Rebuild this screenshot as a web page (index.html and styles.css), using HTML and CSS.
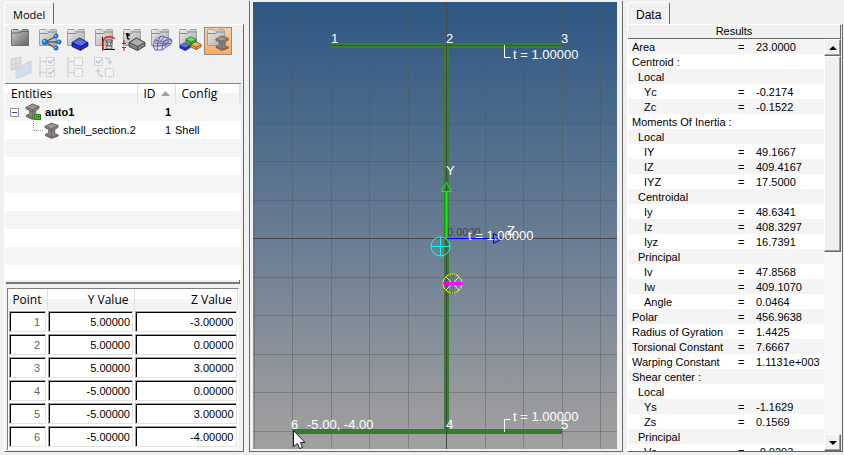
FILE: index.html
```html
<!DOCTYPE HTML>
<html lang="en">
<head>
<meta charset="utf-8">
<title>Section Browser</title>
<link rel="stylesheet" href="styles.css">
</head>
<body>
<svg class="defs" width="0" height="0" aria-hidden="true">
	<defs>
		<linearGradient id="gFolder" x1="0" y1="0" x2="1" y2="1"><stop offset="0" stop-color="#ededed"/><stop offset="1" stop-color="#a8a8a8"/></linearGradient>
		<linearGradient id="gDark" x1="0" y1="0" x2="1" y2="1"><stop offset="0" stop-color="#d0d0d0"/><stop offset="1" stop-color="#606060"/></linearGradient>
		<symbol id="folder" viewBox="0 0 24 24"><path d="M1.500 17.500V2.500Q1.500 1.500 2.500 1.500H8L10 3.500H11L12.500 1.500H17.500Q18.500 1.500 18.500 2.500V17.500Z" fill="url(#gFolder)" stroke="#a0a0a0"/><path d="M2 5.500h7.500l2-1.500h6.500" fill="none" stroke="#888"/></symbol>
		<symbol id="beam" viewBox="0 0 16 18"><path d="M1 4.500L8 1l7 2.500v2L11.500 8v4.500l3.500 1v1.500L8 17.500l-6.500-3V13L5 11.500V8L1 6z" fill="#8c8482" stroke="#635b59" stroke-width=".9"/><path d="M1.500 4.500L8 2l6.500 2L8 6.500z" fill="#9d9694"/><path d="M1 4.500l7 2.500 7-3M8 7v9M5 8l3 1.500L11.500 8M1.500 13L8 16l7-2" fill="none" stroke="#675e5c" stroke-width=".8"/></symbol>
		<symbol id="block" viewBox="0 0 18 14"><path d="M1 5.500l7.500-4.500L17 5.500V9l-7.500 4.500L1 9.500z" fill="currentColor" stroke="#111" stroke-opacity=".7"/><path d="M2 5.500L8.500 1.500l7.500 4-6.500 3.500z" fill="#fff" fill-opacity=".3"/><path d="M1 5.500l8.500 4L17 5.500M9.500 9.500V13" fill="none" stroke="#111" stroke-opacity=".5"/></symbol>
	</defs>
</svg>
<div class="app">
	<section class="pane model">
		<div class="tab">Model</div>
		<div class="panel">
			<div class="toolbar">
				<button title="New"><svg viewBox="0 0 24 24"><path d="M1.500 17.500V2.500Q1.500 1.500 2.500 1.500H8L10 3.500H11L12.500 1.500H17.500Q18.500 1.500 18.500 2.500V17.500Z" fill="url(#gDark)" stroke="#707070"/><path d="M2 5h8l2-1.500h6" fill="none" stroke="#666"/></svg></button>
				<button title="Assembly"><svg viewBox="0 0 24 24"><use href="#folder"/><path d="M19 8L7 14l14 0M7 14l10 6" fill="none" stroke="#333"/><g fill="#1c86e0" stroke="#0b529a" stroke-width=".6"><circle cx="7" cy="14" r="2.800"/><circle cx="18" cy="8" r="2.200"/><circle cx="21" cy="14" r="2.200"/><circle cx="18" cy="20" r="2.200"/></g><g fill="#9ed3ff"><circle cx="6" cy="13" r="1"/><circle cx="17.500" cy="7.500" r=".8"/><circle cx="20.500" cy="13.500" r=".8"/><circle cx="17.500" cy="19.500" r=".8"/></g></svg></button>
				<button title="Component"><svg viewBox="0 0 24 24"><use href="#folder"/><use href="#block" x="5" y="9" width="18" height="14" color="#1c2ce0"/></svg></button>
				<button title="Curve"><svg viewBox="0 0 24 24"><use href="#folder"/><path d="M8.500 9v13.500M8 21.500h13" stroke="#111" fill="none"/><path d="M9 22V14q1-5 5-5h4l3 2" stroke="#f01414" fill="none" stroke-width="1.500"/><path d="M12 12h6v2l-2 2 2 3v2h-6v-2l2-3-2-2z" fill="#ddd" stroke="#333" stroke-width=".8"/><path d="M12 14h6M13 18h4" stroke="#444"/></svg></button>
				<button title="Property"><svg viewBox="0 0 24 24"><use href="#folder"/><path d="M5.500 5v5q0 1 2 1M4 7h4" fill="none" stroke="#000" stroke-width="1.500"/><use href="#block" x="6" y="9" width="18" height="14" color="#888"/><path d="M0 15.500h4M0 19.500h4M2 12v3M2 20v3" stroke="#c01818" fill="none"/></svg></button>
				<button title="Mesh"><svg viewBox="0 0 24 24"><use href="#folder"/><path d="M3 18l2-6 6-4 7 2 4 2-1 4-9 6-7 0zM5 12l7 2 9-3M3 18l8 0 10-3M11 8l-3 5-1 9M18 10l-5 5-1 7M14 9l-4 5M22 12l-6 3-1 4M5 15l12 1" fill="#d5d5ee" fill-opacity=".6" stroke="#5c5cab" stroke-width=".9"/></svg></button>
				<button title="Multiple components"><svg viewBox="0 0 24 24"><use href="#folder"/><use href="#block" x="7" y="8" width="12" height="9" color="#21c82b"/><use href="#block" x="1" y="14" width="12" height="9" color="#2030dc"/><use href="#block" x="12" y="13" width="12" height="9" color="#ee9422"/></svg></button>
				<button class="on" title="Beam section"><svg viewBox="0 0 24 24"><use href="#folder"/><use href="#beam" x="9" y="7" width="14" height="16"/></svg></button>
				<button disabled title="Planes"><svg viewBox="0 0 24 24"><path d="M1 3l10-2v11L1 14zM1 8.500l10-2M6 2v11" fill="#aaa" stroke="#777"/><path d="M6 11q5 1 9-3 3-2 6-3v12q-4 0-7 3-3 2-8 2z" fill="#7da8da" stroke="#5785bd"/></svg></button>
				<button disabled title="Check all"><svg viewBox="0 0 24 24"><path d="M2 1v20M2 5.500h6M2 16.500h6" stroke="#888" stroke-width="1.500"/><path d="M8.500 1.500h8v8h-8zM8.500 12.500h8v8h-8z" fill="#fff" stroke="#888"/><path d="M10 5l2 2 4-4M10 16l2 2 4-4" fill="none" stroke="#2338b5" stroke-width="1.500"/></svg></button>
				<button disabled title="Uncheck all"><svg viewBox="0 0 24 24"><path d="M2 1v20M2 5.500h6M2 16.500h6" stroke="#888" stroke-width="1.500"/><path d="M8.500 1.500h8v8h-8zM8.500 12.500h8v8h-8z" fill="#fff" stroke="#888"/></svg></button>
				<button disabled title="Reverse"><svg viewBox="0 0 24 24"><path d="M.5 1.500h8v8h-8zM11.500 12.500h8v8h-8z" fill="#fff" stroke="#888"/><path d="M2 5l2 2 4-4" fill="none" stroke="#2338b5" stroke-width="1.500"/><path d="M11 2q5 0 5 4" fill="none" stroke="#888" stroke-width="2"/><path d="M13 5h6l-3 4z" fill="#888"/><path d="M9 20q-5 0-5-5" fill="none" stroke="#888" stroke-width="2"/><path d="M1 16h6l-3-4z" fill="#888"/></svg></button>
			</div>
			<div class="treebox">
				<table class="tree">
					<thead><tr><th class="ent">Entities</th><th class="id">ID <svg class="sort" viewBox="0 0 9 5"><path d="M0 5l4.500-5L9 5z" fill="#a5a195"/></svg></th><th class="cfg">Config</th><th class="rest"></th></tr></thead>
					<tbody>
						<tr class="parent"><td><div class="node"><svg class="twist" viewBox="0 0 9 9"><path d="M.5 .5h8v8h-8z" fill="#fff" stroke="#919191"/><path d="M2 4.500h5" stroke="#333d8a"/></svg><svg class="ico" viewBox="0 0 18 18"><use href="#beam" width="15" height="17"/><path d="M9.500 11.500h6v5h-6z" fill="#55c51d" stroke="#247a0a"/><path d="M11 14h4" stroke="#176000"/></svg>auto1</div></td><td class="num">1</td><td></td><td></td></tr>
						<tr><td><div class="node child"><svg class="elbow" viewBox="0 0 10 18"><path d="M.5 0v9.500H10" fill="none" stroke="#999" stroke-dasharray="1 1"/></svg><svg class="ico" viewBox="0 0 18 18"><use href="#beam" x="1" y="1" width="15" height="17"/></svg>shell_section.2</div></td><td class="num">1</td><td>Shell</td><td></td></tr>
					</tbody>
				</table>
			</div>
			<div class="splitter"></div>
			<div class="pointbox">
				<table class="points">
					<thead><tr><th class="pt">Point</th><th class="yv">Y Value</th><th>Z Value</th></tr></thead>
					<tbody>
						<tr><td><input class="key" aria-label="Point" value="1" readonly></td><td><input aria-label="Y Value 1" value="5.00000"></td><td><input aria-label="Z Value 1" value="-3.00000"></td></tr>
						<tr><td><input class="key" aria-label="Point" value="2" readonly></td><td><input aria-label="Y Value 2" value="5.00000"></td><td><input aria-label="Z Value 2" value="0.00000"></td></tr>
						<tr><td><input class="key" aria-label="Point" value="3" readonly></td><td><input aria-label="Y Value 3" value="5.00000"></td><td><input aria-label="Z Value 3" value="3.00000"></td></tr>
						<tr><td><input class="key" aria-label="Point" value="4" readonly></td><td><input aria-label="Y Value 4" value="-5.00000"></td><td><input aria-label="Z Value 4" value="0.00000"></td></tr>
						<tr><td><input class="key" aria-label="Point" value="5" readonly></td><td><input aria-label="Y Value 5" value="-5.00000"></td><td><input aria-label="Z Value 5" value="3.00000"></td></tr>
						<tr><td><input class="key" aria-label="Point" value="6" readonly></td><td><input aria-label="Y Value 6" value="-5.00000"></td><td><input aria-label="Z Value 6" value="-4.00000"></td></tr>
					</tbody>
				</table>
			</div>
		</div>
	</section>

	<main class="view">
		<svg class="plot" viewBox="253 2 364 447" preserveAspectRatio="xMidYMid meet">
			<!-- grid -->
			<path class="grid" d="M254.500 2v447M292.500 2v447M331.500 2v447M369.500 2v447M408.500 2v447M485.500 2v447M523.500 2v447M562.500 2v447M600.500 2v447M253 7.500h364M253 45.500h364M253 84.500h364M253 123.500h364M253 161.500h364M253 200.500h364M253 277.500h364M253 315.500h364M253 354.500h364M253 392.500h364M253 431.500h364"/>
			<!-- section -->
			<path class="plate" d="M331 45.500h231M446.500 45v386M293 431.500h269"/>
			<path class="axis" d="M253 238.500h364M446.500 2v447"/>
			<path class="mid" d="M331 45.500h231"/>
			<path d="M331 45.500h1M561.500 45.500h1M561.500 431.500h1" stroke="#f00"/>
			<text class="origin" x="447" y="236">0.0000</text>
			<!-- local axes -->
			<path d="M446.500 238V191" stroke="#0f0" stroke-width="2"/>
			<path d="M441.500 191.500h10l-5-9z" stroke="#0f0" fill="none"/>
			<path d="M447 238.500h51M493.500 233.500v10l9-5z" stroke="#00f" fill="none"/>
			<!-- centroid and shear center -->
			<path d="M431 246.500h19M440.500 237v19" stroke="#0ff"/>
			<circle cx="440.500" cy="246.500" r="9.500" fill="none" stroke="#0ff"/>
			<g stroke="#ff0" fill="none"><circle cx="452.500" cy="283.500" r="9.500" stroke-dasharray="5 1"/><path d="M446 277l13 13M459 277l-13 13"/></g>
			<path d="M443 282.500h20M443 284.500h20M451.500 274v20M453.500 274v20" stroke="#f0f"/>
			<path d="M504.500 45v12.500h6M504.500 432v-12.500h6" fill="none" stroke="#fff"/>
			<g class="labels">
				<text x="331" y="43">1</text><text x="446" y="43">2</text><text x="561" y="43">3</text>
				<text x="513" y="59">t = 1.00000</text>
				<text x="446" y="175">Y</text><text x="507" y="235">Z</text>
				<text x="468" y="240">t = 1.00000</text>
				<text x="513" y="421">t = 1.00000</text>
				<text x="291" y="429">6</text><text x="307" y="429">-5.00, -4.00</text>
				<text x="446" y="429">4</text><text x="561" y="429">5</text>
			</g>
			<path d="M293.500 430.500v16l4-3 2 5 3-1-2-5h4.500z" fill="#fff" stroke="#171a30"/>
		</svg>
	</main>

	<section class="pane data">
		<div class="tab">Data</div>
		<div class="results">
			<div class="caption">Results</div>
			<div class="scroller">
				<div class="rows">
				<table class="values">
					<tr><td>Area</td><td>=</td><td>23.0000</td></tr>
					<tr><td>Centroid :</td><td></td><td></td></tr>
					<tr><td class="l1">Local</td><td></td><td></td></tr>
					<tr><td class="l2">Yc</td><td>=</td><td>-0.2174</td></tr>
					<tr><td class="l2">Zc</td><td>=</td><td>-0.1522</td></tr>
					<tr><td>Moments Of Inertia :</td><td></td><td></td></tr>
					<tr><td class="l1">Local</td><td></td><td></td></tr>
					<tr><td class="l2">IY</td><td>=</td><td>49.1667</td></tr>
					<tr><td class="l2">IZ</td><td>=</td><td>409.4167</td></tr>
					<tr><td class="l2">IYZ</td><td>=</td><td>17.5000</td></tr>
					<tr><td class="l1">Centroidal</td><td></td><td></td></tr>
					<tr><td class="l2">Iy</td><td>=</td><td>48.6341</td></tr>
					<tr><td class="l2">Iz</td><td>=</td><td>408.3297</td></tr>
					<tr><td class="l2">Iyz</td><td>=</td><td>16.7391</td></tr>
					<tr><td class="l1">Principal</td><td></td><td></td></tr>
					<tr><td class="l2">Iv</td><td>=</td><td>47.8568</td></tr>
					<tr><td class="l2">Iw</td><td>=</td><td>409.1070</td></tr>
					<tr><td class="l2">Angle</td><td>=</td><td>0.0464</td></tr>
					<tr><td>Polar</td><td>=</td><td>456.9638</td></tr>
					<tr><td>Radius of Gyration</td><td>=</td><td>1.4425</td></tr>
					<tr><td>Torsional Constant</td><td>=</td><td>7.6667</td></tr>
					<tr><td>Warping Constant</td><td>=</td><td>1.1131e+003</td></tr>
					<tr><td>Shear center :</td><td></td><td></td></tr>
					<tr><td class="l1">Local</td><td></td><td></td></tr>
					<tr><td class="l2">Ys</td><td>=</td><td>-1.1629</td></tr>
					<tr><td class="l2">Zs</td><td>=</td><td>0.1569</td></tr>
					<tr><td class="l1">Principal</td><td></td><td></td></tr>
					<tr><td class="l2">Vs</td><td>=</td><td>-0.0203</td></tr>
				</table>
				</div>
				<div class="bar">
					<button class="arrow" aria-label="Scroll up"><svg viewBox="0 0 8 4"><path d="M0 4l4-4 4 4z"/></svg></button>
					<div class="thumb"></div>
					<div class="track"></div>
					<button class="arrow" aria-label="Scroll down"><svg viewBox="0 0 8 4"><path d="M0 0l4 4 4-4z"/></svg></button>
				</div>
			</div>
		</div>
	</section>
</div>
</body>
</html>
```
FILE: styles.css
```css
* { box-sizing: border-box; }
body {
 margin: 0;
 background: #f0f0f0;
 color: #000;
 font: 11px "Liberation Sans", Arial, sans-serif;
}
button, input { font: inherit; }
table { border-collapse: collapse; }
td, th { padding: 0; }
svg { display: block; }
.defs { position: absolute; }
.app {
 display: grid;
 grid-template-columns: 249px 1fr 221px;
 height: 100vh;
}
.pane {
 display: flex;
 flex-direction: column;
 min-height: 0;
 padding: 2px 5px 3px 4px;
}
.tab {
 align-self: flex-start;
 height: 22px;
 padding: 0 8px;
 line-height: 24px;
 font-size: 12px;
 border: 1px solid #fff;
 border-right: 1px solid #696969;
 border-bottom: 0;
 border-radius: 2px 2px 0 0;
}
.model .tab { font-family: "Open Sans", sans-serif; font-size: 11px; }
.panel {
 flex: 1;
 display: flex;
 flex-direction: column;
 min-height: 0;
 border: 1px solid #fff;
 border-right: 1px solid #696969;
 border-bottom: 1px solid #696969;
}

/* toolbar */
.toolbar {
 display: grid;
 grid-template-columns: repeat(8, 28px);
 grid-auto-rows: 28px;
 padding: 2px 0 0 3px;
 height: 58px;
}
.toolbar button {
 padding: 0 1px 2px;
 border: 1px solid transparent;
 background: none;
}
.toolbar button svg { width: 24px; height: 24px; }
.toolbar .on {
 border: 1px solid #8d8d8d;
 background: linear-gradient(#f5cfa4, #ffa95f);
}
.toolbar button:disabled svg { opacity: .25; }

/* entity tree */
.treebox {
 flex: 1;
 min-height: 0;
 margin-right: 2px;
 border-top: 1px solid #828282;
 background: repeating-linear-gradient(#f5f5f5 0 18px, #fff 18px 36px) 0 19px;
 overflow: hidden;
}
.tree { width: 100%; table-layout: fixed; }
.tree th, .points th {
 font: 12px "Open Sans", sans-serif;
 background: linear-gradient(#fff 45%, #f3f4f6 50%, #f1f2f4);
 border-right: 1px solid #dfe0e2;
}
.tree th { height: 19px; text-align: left; padding-left: 6px; white-space: nowrap; }
.tree .ent { width: 132px; }
.tree .id { width: 38px; }
.tree .cfg { width: 64px; }
.tree td { height: 18px; white-space: nowrap; }
.sort { display: inline-block; width: 9px; height: 5px; margin: 0 0 2px 2px; }
.parent { font-weight: bold; }
.num { text-align: right; padding-right: 4px; }
.node { display: flex; align-items: center; padding-left: 5px; height: 18px; }
.twist { width: 9px; height: 9px; margin-right: 6px; }
.ico { width: 18px; height: 18px; margin-right: 2px; }
.child { padding-left: 28px; }
.elbow { width: 10px; height: 18px; }
.splitter {
 height: 4px;
 margin: 0 3px 4px 1px;
 border-right: 1px solid #696969;
 border-bottom: 2px solid #777;
}

/* point table */
.pointbox {
 margin: 0 4px 1px 2px;
 border-top: 1px solid #808080;
 border-left: 1px solid #808080;
 border-right: 1px solid #fff;
 padding-bottom: 2px;
 background: #fff;
}
.points { width: 100%; table-layout: fixed; }
.points th { height: 21px; text-align: right; padding-right: 5px; }
.points .pt { width: 39px; }
.points .yv { width: 87px; }
.points td { height: 23px; padding: 1px; }
.points input {
 display: block;
 width: 100%;
 height: 21px;
 padding: 0 2px;
 border: 1px solid #a0a0a0;
 border-right-color: #e3e3e3;
 border-bottom-color: #e3e3e3;
 box-shadow: inset 1px 1px #000;
 background: #fff;
 text-align: right;
}
.points .key { color: #666; padding-right: 5px; }

/* section view */
.view {
 min-width: 0;
 min-height: 0;
 margin: 1px 0 3px;
 padding: 1px 5px 2px 3px;
 border: 0 solid #696969;
 border-width: 0 1px 1px 1px;
}
.plot {
 width: 100%;
 height: 100%;
 background: linear-gradient(#2d5783, #697d93 53%, #999a9d 90%, #a0a0a0);
}
.grid { stroke: #555; stroke-opacity: .4; fill: none; }
.axis { stroke: #484848; }
.mid { stroke: #286323; }
.plate { stroke: #347e2d; stroke-width: 5; fill: none; }
.labels text { font-size: 13px; fill: #fff; }
.origin { font-size: 11px; fill: #444; }

/* results */
.data { padding: 2px 1px 3px 4px; }
.results {
 flex: 1;
 display: flex;
 flex-direction: column;
 min-height: 0;
 border: 1px solid #fff;
 border-right: 1px solid #696969;
 border-bottom: 1px solid #696969;
}
.caption {
 height: 14px;
 line-height: 13px;
 margin-right: 1px;
 border-bottom: 1px solid #696969;
 border-right: 1px solid #696969;
 text-align: center;
}
.scroller { flex: 1; display: flex; min-height: 0; }
.rows { flex: 1; overflow: hidden; background: #fff; }
.values { width: 100%; table-layout: fixed; }
.values tr:nth-child(odd) { background: #f4f4f4; }
.values td { height: 15px; padding-left: 4px; white-space: nowrap; }
.values td:first-child { width: 106px; }
.values td:nth-child(2) { width: 18px; }
.values .l1 { padding-left: 10px; }
.values .l2 { padding-left: 16px; }
.bar {
 width: 17px;
 margin-right: 1px;
 display: flex;
 flex-direction: column;
}
.arrow {
 height: 17px;
 padding: 0;
 display: flex;
 align-items: center;
 justify-content: center;
}
.arrow svg { width: 8px; height: 4px; }
.arrow, .thumb {
 background: #f0f0f0;
 border: 1px solid #fff;
 border-right-color: #696969;
 border-bottom-color: #696969;
 box-shadow: inset -1px -1px #a0a0a0;
}
.thumb { flex: 195; }
.track { flex: 183; background: repeating-conic-gradient(#fff 0 25%, #f0f0f0 0 50%) 0 0 / 2px 2px; }
```
